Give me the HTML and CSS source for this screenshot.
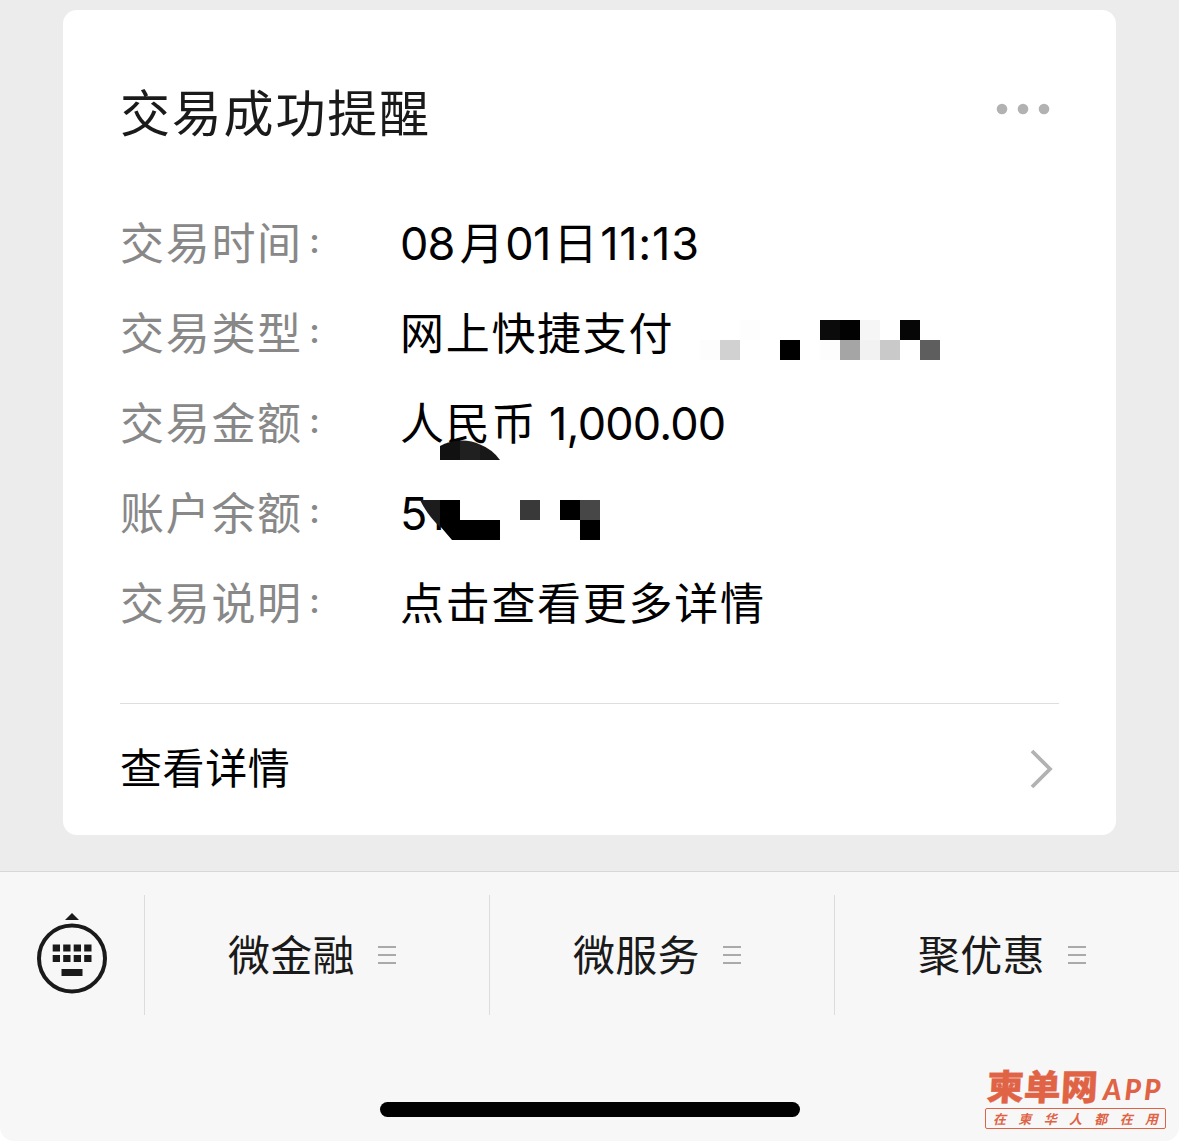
FILE: index.html
```html
<!DOCTYPE html>
<html lang="zh-CN">
<head>
<meta charset="utf-8">
<title>交易成功提醒</title>
<link rel="stylesheet" href="styles.css">
</head>
<body>
<div class="screen">
  <main class="chat">
    <article class="card">
      <header class="card-head">
        <h1 class="title">交易成功提醒</h1>
        <svg class="more" width="54" height="12" viewBox="0 0 54 12" fill="#b2b2b2"><circle cx="6" cy="6" r="5.3"/><circle cx="27" cy="6" r="5.3"/><circle cx="48" cy="6" r="5.3"/></svg>
      </header>
      <dl class="details">
        <dt>交易时间<span class="colon">：</span></dt><dd><span class="num">08</span><span class="unit month">月</span><span class="num">01</span><span class="unit">日</span><span class="num time">11:13</span></dd>
        <dt>交易类型<span class="colon">：</span></dt><dd>网上快捷支付</dd>
        <dt>交易金额<span class="colon">：</span></dt><dd>人民币<span class="num amount">1,000.00</span></dd>
        <dt>账户余额<span class="colon">：</span></dt><dd><span class="num">51</span></dd>
        <dt>交易说明<span class="colon">：</span></dt><dd>点击查看更多详情</dd>
        <svg class="mosaic" width="560" height="240" viewBox="400 310 560 240" shape-rendering="crispEdges">
          <path fill="#fdfdfd" d="M740 320h20v20h-20zM700 340h20v20h-20zM820 340h20v20h-20z"/>
          <path fill="#d1d1d1" d="M720 340h20v20h-20z"/>
          <path fill="#000" d="M780 340h20v20h-20z"/>
          <path fill="#0b0b0b" d="M820 320h20v20h-20z"/>
          <path fill="#020202" d="M840 320h20v20h-20z"/>
          <path fill="#f6f6f6" d="M860 320h20v20h-20z"/>
          <path fill="#060606" d="M900 320h20v20h-20z"/>
          <path fill="#a5a5a5" d="M840 340h20v20h-20z"/>
          <path fill="#f2f2f2" d="M860 340h20v20h-20z"/>
          <path fill="#c9c9c9" d="M880 340h20v20h-20z"/>
          <path fill="#5e5e5e" d="M920 340h20v20h-20z"/>
          <g shape-rendering="auto">
            <path fill="#111" d="M440 460V446Q449 441 460 440.500V460z"/>
            <path fill="#202020" d="M460 460V440.500Q471 440 480 444.500V460z"/>
            <path fill="#181818" d="M480 460V444.500Q492 449 500 460z"/>
            <path fill="#fff" d="M428 490H450V500H428z"/>
            <path fill="#1c1c1c" d="M420 500H440V527Q428 516 420 500z"/>
            <path fill="#000" d="M440 500H460V520H500V540H452L440 526z"/>
          </g>
          <path fill="#fff" d="M460 500h40v20h-40z"/>
          <path fill="#393939" d="M520 500h20v20h-20z"/>
          <path fill="#000" d="M560 500h20v20h-20zM580 520h20v20h-20z"/>
          <path fill="#474747" d="M580 500h20v20h-20z"/>
        </svg>
      </dl>
      <footer class="card-foot">
        <span class="link">查看详情</span>
        <svg width="24" height="42" viewBox="0 0 24 42" fill="none" stroke="#b2b2b2" stroke-width="3.800"><path d="M2 3L20 21L2 39"/></svg>
      </footer>
    </article>
  </main>
  <nav class="bar">
    <div class="tabs">
      <div class="keyboard">
        <svg width="72" height="84" viewBox="0 0 72 84" fill="#1a1a1a">
          <path d="M36 1L43 8H29z"/>
          <circle cx="36" cy="46.500" r="33" fill="none" stroke="#1a1a1a" stroke-width="4"/>
          <path d="M16.700 32.500h7.300v7h-7.300zM27.200 32.500h7.300v7h-7.300zM37.700 32.500h7.300v7h-7.300zM48.200 32.500h7.300v7h-7.300zM16.700 43h7.300v7h-7.300zM27.200 43h7.300v7h-7.300zM37.700 43h7.300v7h-7.300zM48.200 43h7.300v7h-7.300zM25.500 57h21v7h-21z"/>
        </svg>
      </div>
      <div class="tab"><span class="tab-name">微金融</span><svg width="18" height="20" viewBox="0 0 18 20" fill="#aaa"><path d="M0 1h18v2H0zM0 9h18v2H0zM0 17h18v2H0z"/></svg></div>
      <div class="tab"><span class="tab-name">微服务</span><svg width="18" height="20" viewBox="0 0 18 20" fill="#aaa"><path d="M0 1h18v2H0zM0 9h18v2H0zM0 17h18v2H0z"/></svg></div>
      <div class="tab"><span class="tab-name">聚优惠</span><svg width="18" height="20" viewBox="0 0 18 20" fill="#aaa"><path d="M0 1h18v2H0zM0 9h18v2H0zM0 17h18v2H0z"/></svg></div>
    </div>
    <div class="home"></div>
    <div class="brand">
      <div class="brand-name"><span class="brand-cn">柬单网</span><span class="brand-app">APP</span></div>
      <div class="slogan"><span>在</span><span>柬</span><span>华</span><span>人</span><span>都</span><span>在</span><span>用</span></div>
    </div>
  </nav>
</div>
</body>
</html>
```
FILE: styles.css
```css
* { box-sizing: border-box; }
body {
  margin: 0;
  background: #fff;
  font-family: "Noto Sans CJK SC", sans-serif;
  color: #000;
}
.screen {
  display: flex;
  flex-direction: column;
  width: 1179px;
  height: 1141px;
  overflow: hidden;
  background: #ececec;
}
.chat { height: 871px; padding: 10px 63px 0; }
.card {
  height: 825px;
  padding: 0 57px;
  border-radius: 14px;
  background: #fff;
}
.card-head {
  display: flex;
  justify-content: space-between;
  height: 190px;
}
.title {
  margin: 0;
  padding-top: 60px;
  font-size: 50px;
  font-weight: 400;
  line-height: 80px;
  letter-spacing: 1.8px;
  color: #1a1a1a;
}
.more { margin: 93px 9px 0 0; }
.details {
  position: relative;
  display: grid;
  grid-template-columns: 280px 1fr;
  grid-auto-rows: 90px;
  height: 504px;
  margin: 0;
  border-bottom: 1px solid #dedede;
  font-size: 44px;
  line-height: 83px;
  letter-spacing: 1.7px;
}
dt { color: #888; font-weight: 400; white-space: nowrap; }
dd { margin: 0; white-space: nowrap; }
.colon {
  margin-left: 5px;
  font-size: 27px;
  font-weight: 700;
  line-height: 1;
  vertical-align: 7px;
}
.num { font-family: Inter, sans-serif; font-size: 45px; letter-spacing: -.8px; }
.unit { margin: 0 0 0 3px; }
.month { margin-left: 5px; }
.time { margin-left: 1px; letter-spacing: .8px; }
.amount { margin-left: 12px; }
.mosaic { position: absolute; left: 280px; top: 110px; }
.card-foot {
  display: flex;
  align-items: center;
  justify-content: space-between;
  height: 130px;
  padding-right: 5px;
  font-size: 42px;
  letter-spacing: .6px;
}
.link { padding-bottom: 7px; }
.bar {
  position: relative;
  height: 270px;
  border-top: 1px solid #d8d8d8;
  border-radius: 0 0 14px 14px;
  background: #f7f7f7;
  box-shadow: 0 14px 0 #fff;
}
.tabs {
  display: grid;
  grid-template-columns: 144px repeat(3, 345px);
  height: 143px;
  padding-top: 23px;
}
.keyboard { padding: 17px 0 0 36px; }
.tab {
  display: flex;
  align-items: center;
  gap: 23px;
  padding-left: 83px;
  border-left: 1px solid #dcdcdc;
  color: #1a1a1a;
  font-size: 42px;
  letter-spacing: .3px;
}
.tab-name { padding-bottom: 6px; }
.home {
  width: 420px;
  height: 15px;
  margin: 87px auto 0;
  border-radius: 8px;
  background: #000;
}
.brand {
  position: absolute;
  left: 985px;
  top: 197px;
  width: 181px;
  color: #e06346;
}
.brand-name {
  display: flex;
  align-items: center;
  height: 39px;
  padding-left: 2px;
}
.brand-cn {
  font-size: 37px;
  font-weight: 900;
  line-height: 37px;
  padding-bottom: 6px;
  -webkit-text-stroke: .4px #e06346;
  transform: skewX(-3deg) scaleY(.96);
}
.brand-app {
  margin-left: 5px;
  font-family: Lato, sans-serif;
  font-size: 28px;
  font-style: italic;
  font-weight: 900;
  line-height: 30px;
  letter-spacing: 3px;
}
.slogan {
  display: flex;
  align-items: center;
  justify-content: space-between;
  height: 21px;
  padding: 0 7px;
  border: 1px solid #e06346;
  border-radius: 2px;
  font-size: 13px;
  font-weight: 700;
  font-style: italic;
  line-height: 15px;
}
```
